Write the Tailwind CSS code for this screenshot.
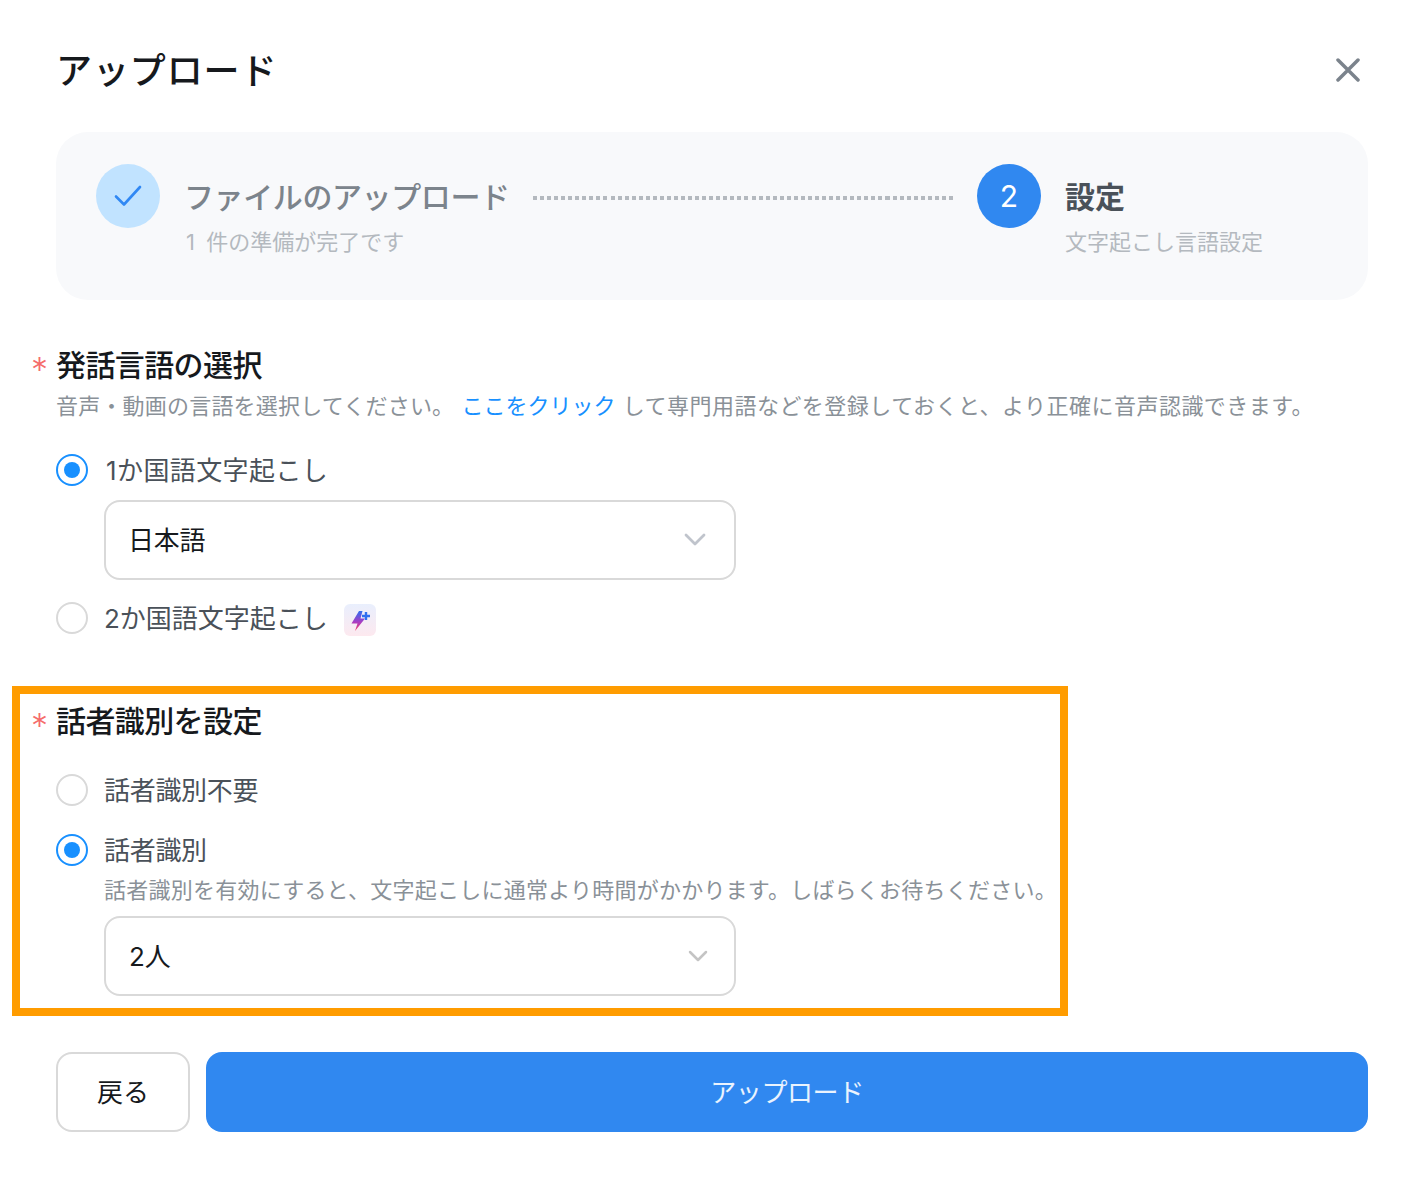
<!DOCTYPE html>
<html lang="ja">
<head>
  <meta charset="UTF-8" />
  <meta name="viewport" content="width=device-width, initial-scale=1.0" />
  <title>アップロード</title>
  <script src="https://cdn.jsdelivr.net/npm/@tailwindcss/browser@4"></script>
</head>
<body class="bg-white font-['Inter','Noto_Sans_CJK_JP',sans-serif]">
  <div class="relative h-[1190px] w-[1426px] overflow-hidden pr-[58px] pl-[56px]">
    <!-- Header -->
    <div class="flex h-[132px] items-start justify-between pt-[47px]">
      <h1 class="text-[36px] leading-[48px] font-medium tracking-[0.9px] text-[#16191d]">アップロード</h1>
      <svg class="mt-[11px] mr-[8px]" width="24" height="24" viewBox="0 0 24 24" fill="none" stroke="#7b838c" stroke-width="3.500" stroke-linecap="round"><path d="M2 2l20 20M22 2L2 22" /></svg>
    </div>

    <!-- Stepper -->
    <div class="flex h-[168px] items-start rounded-[32px] bg-[#f8f9fb] pt-[32px] pl-[40px]">
      <div class="flex h-[64px] w-[64px] shrink-0 items-center justify-center rounded-full bg-[#c1e3ff]">
        <svg width="30" height="24" viewBox="0 0 30 24" fill="none" stroke="#3088f4" stroke-width="2.600" stroke-linecap="round" stroke-linejoin="round"><path d="M3 12.500l8 8L27 3" /></svg>
      </div>
      <div class="ml-[24px] w-[325px] shrink-0">
        <div class="text-[30px] leading-[66px] font-medium tracking-[-0.4px] whitespace-nowrap text-[#7c848c]">ファイルのアップロード</div>
        <div class="mt-[-3px] ml-[2px] text-[22px] leading-[30px] whitespace-nowrap text-[#b4b9bf] [word-spacing:5px]">1 件の準備が完了です</div>
      </div>
      <div class="mt-[32px] ml-[24px] h-[4px] w-[420px] shrink-0 bg-[repeating-linear-gradient(90deg,#b4b9bf_0_4px,transparent_4px_7.050px)]"></div>
      <div class="ml-[24px] flex h-[64px] w-[64px] shrink-0 items-center justify-center rounded-full bg-[#3088f0] text-[30px] text-white">2</div>
      <div class="ml-[24px]">
        <div class="text-[30px] leading-[66px] font-bold text-[#4a5159]">設定</div>
        <div class="mt-[-3px] text-[22px] leading-[30px] whitespace-nowrap text-[#b4b9bf]">文字起こし言語設定</div>
      </div>
    </div>

    <!-- Language section -->
    <div class="relative mt-[43px]">
      <span class="absolute top-[5px] left-[-25px] text-[34px] leading-[44px] font-light text-[#f56c6c]">*</span>
      <h2 class="text-[30px] leading-[44px] font-medium tracking-[-0.6px] text-[#16191d]">発話言語の選択</h2>
      <p class="text-[22px] leading-[38px] whitespace-nowrap text-[#8a9198]"><span class="tracking-[0.2px]">音声・動画の言語を選択してください。</span> <a class="ml-[1px] text-[#1890ff]">ここをクリック</a> <span class="ml-[1px] tracking-[0.48px]">して専門用語などを登録しておくと、より正確に音声認識できます。</span></p>
      <div class="mt-[25px] flex h-[40px] items-center">
        <span class="flex h-[32px] w-[32px] items-center justify-center rounded-full border-2 border-[#1890ff]"><span class="h-[16px] w-[16px] rounded-full bg-[#1890ff]"></span></span>
        <span class="ml-[18px] text-[26px] tracking-[0.4px] text-[#4a5159]">1か国語文字起こし</span>
      </div>
      <div class="mt-[10px] ml-[48px] flex h-[80px] w-[632px] items-center justify-between rounded-[16px] border-2 border-[#d9d9d9] pr-[28px] pl-[22px] text-[26px] tracking-[-0.3px] text-[#16191d]">
        <span>日本語</span>
        <svg width="22" height="14" viewBox="0 0 22 14" fill="none" stroke="#c0c4cc" stroke-width="2.800" stroke-linecap="round" stroke-linejoin="round"><path d="M2 2l9 9 9-9" /></svg>
      </div>
      <div class="mt-[18px] flex h-[40px] items-center">
        <span class="h-[32px] w-[32px] rounded-full border-2 border-[#d9d9d9]"></span>
        <span class="ml-[16px] text-[26px] text-[#4a5159]">2か国語文字起こし</span>
        <span class="mt-[4px] ml-[16px] h-[32px] w-[32px] rounded-[6px] bg-gradient-to-b from-[#e9effd] to-[#fde9ef]">
          <svg width="32" height="32" viewBox="0 0 32 32">
            <defs><linearGradient id="bolt" x1="0" y1="0" x2="0" y2="1"><stop offset="0" stop-color="#2f6ff0" /><stop offset="0.55" stop-color="#a83cc4" /><stop offset="1" stop-color="#f53c62" /></linearGradient></defs>
            <path d="M15 7h3.500l-2 7.500h4.500L11 27l2.500-7.500H7.500z" fill="url(#bolt)" />
            <path d="M22 8v8M18 12h8" stroke="#2f6ff0" stroke-width="2.400" fill="none" />
          </svg>
        </span>
      </div>
    </div>

    <!-- Speaker section -->
    <div class="relative mt-[61px]">
      <span class="absolute top-[5px] left-[-25px] text-[34px] leading-[44px] font-light text-[#f56c6c]">*</span>
      <h2 class="text-[30px] leading-[44px] font-medium tracking-[-0.6px] text-[#16191d]">話者識別を設定</h2>
      <div class="mt-[27px] flex h-[40px] items-center">
        <span class="h-[32px] w-[32px] rounded-full border-2 border-[#d9d9d9]"></span>
        <span class="ml-[16px] text-[26px] tracking-[-0.3px] text-[#4a5159]">話者識別不要</span>
      </div>
      <div class="mt-[20px] flex h-[40px] items-center">
        <span class="flex h-[32px] w-[32px] items-center justify-center rounded-full border-2 border-[#1890ff]"><span class="h-[16px] w-[16px] rounded-full bg-[#1890ff]"></span></span>
        <span class="ml-[16px] text-[26px] tracking-[-0.3px] text-[#4a5159]">話者識別</span>
      </div>
      <p class="mt-[2px] ml-[48px] text-[22px] leading-[36px] tracking-[0.24px] whitespace-nowrap text-[#8a9198]">話者識別を有効にすると、文字起こしに通常より時間がかかります。しばらくお待ちください。</p>
      <div class="mt-[8px] ml-[48px] flex h-[80px] w-[632px] items-center justify-between rounded-[16px] border-2 border-[#d9d9d9] pr-[26px] pl-[23px] text-[26px] text-[#16191d]">
        <span>2人</span>
        <svg width="20" height="12" viewBox="0 0 20 12" fill="none" stroke="#c4c4c4" stroke-width="2.500" stroke-linecap="round" stroke-linejoin="round"><path d="M2 2l8 8 8-8" /></svg>
      </div>
    </div>

    <!-- Footer buttons -->
    <div class="mt-[56px] flex gap-[16px]">
      <button class="h-[80px] w-[134px] rounded-[16px] border-2 border-[#d9d9d9] bg-white text-[26px] text-[#16191d]">戻る</button>
      <button class="h-[80px] flex-1 rounded-[16px] bg-[#3088f0] text-[26px] tracking-[-0.4px] text-white/90">アップロード</button>
    </div>

    <!-- Highlight annotation -->
    <div class="pointer-events-none absolute top-[686px] left-[12px] h-[330px] w-[1056px] border-[8px] border-[#ff9c00]"></div>
  </div>
</body>
</html>
